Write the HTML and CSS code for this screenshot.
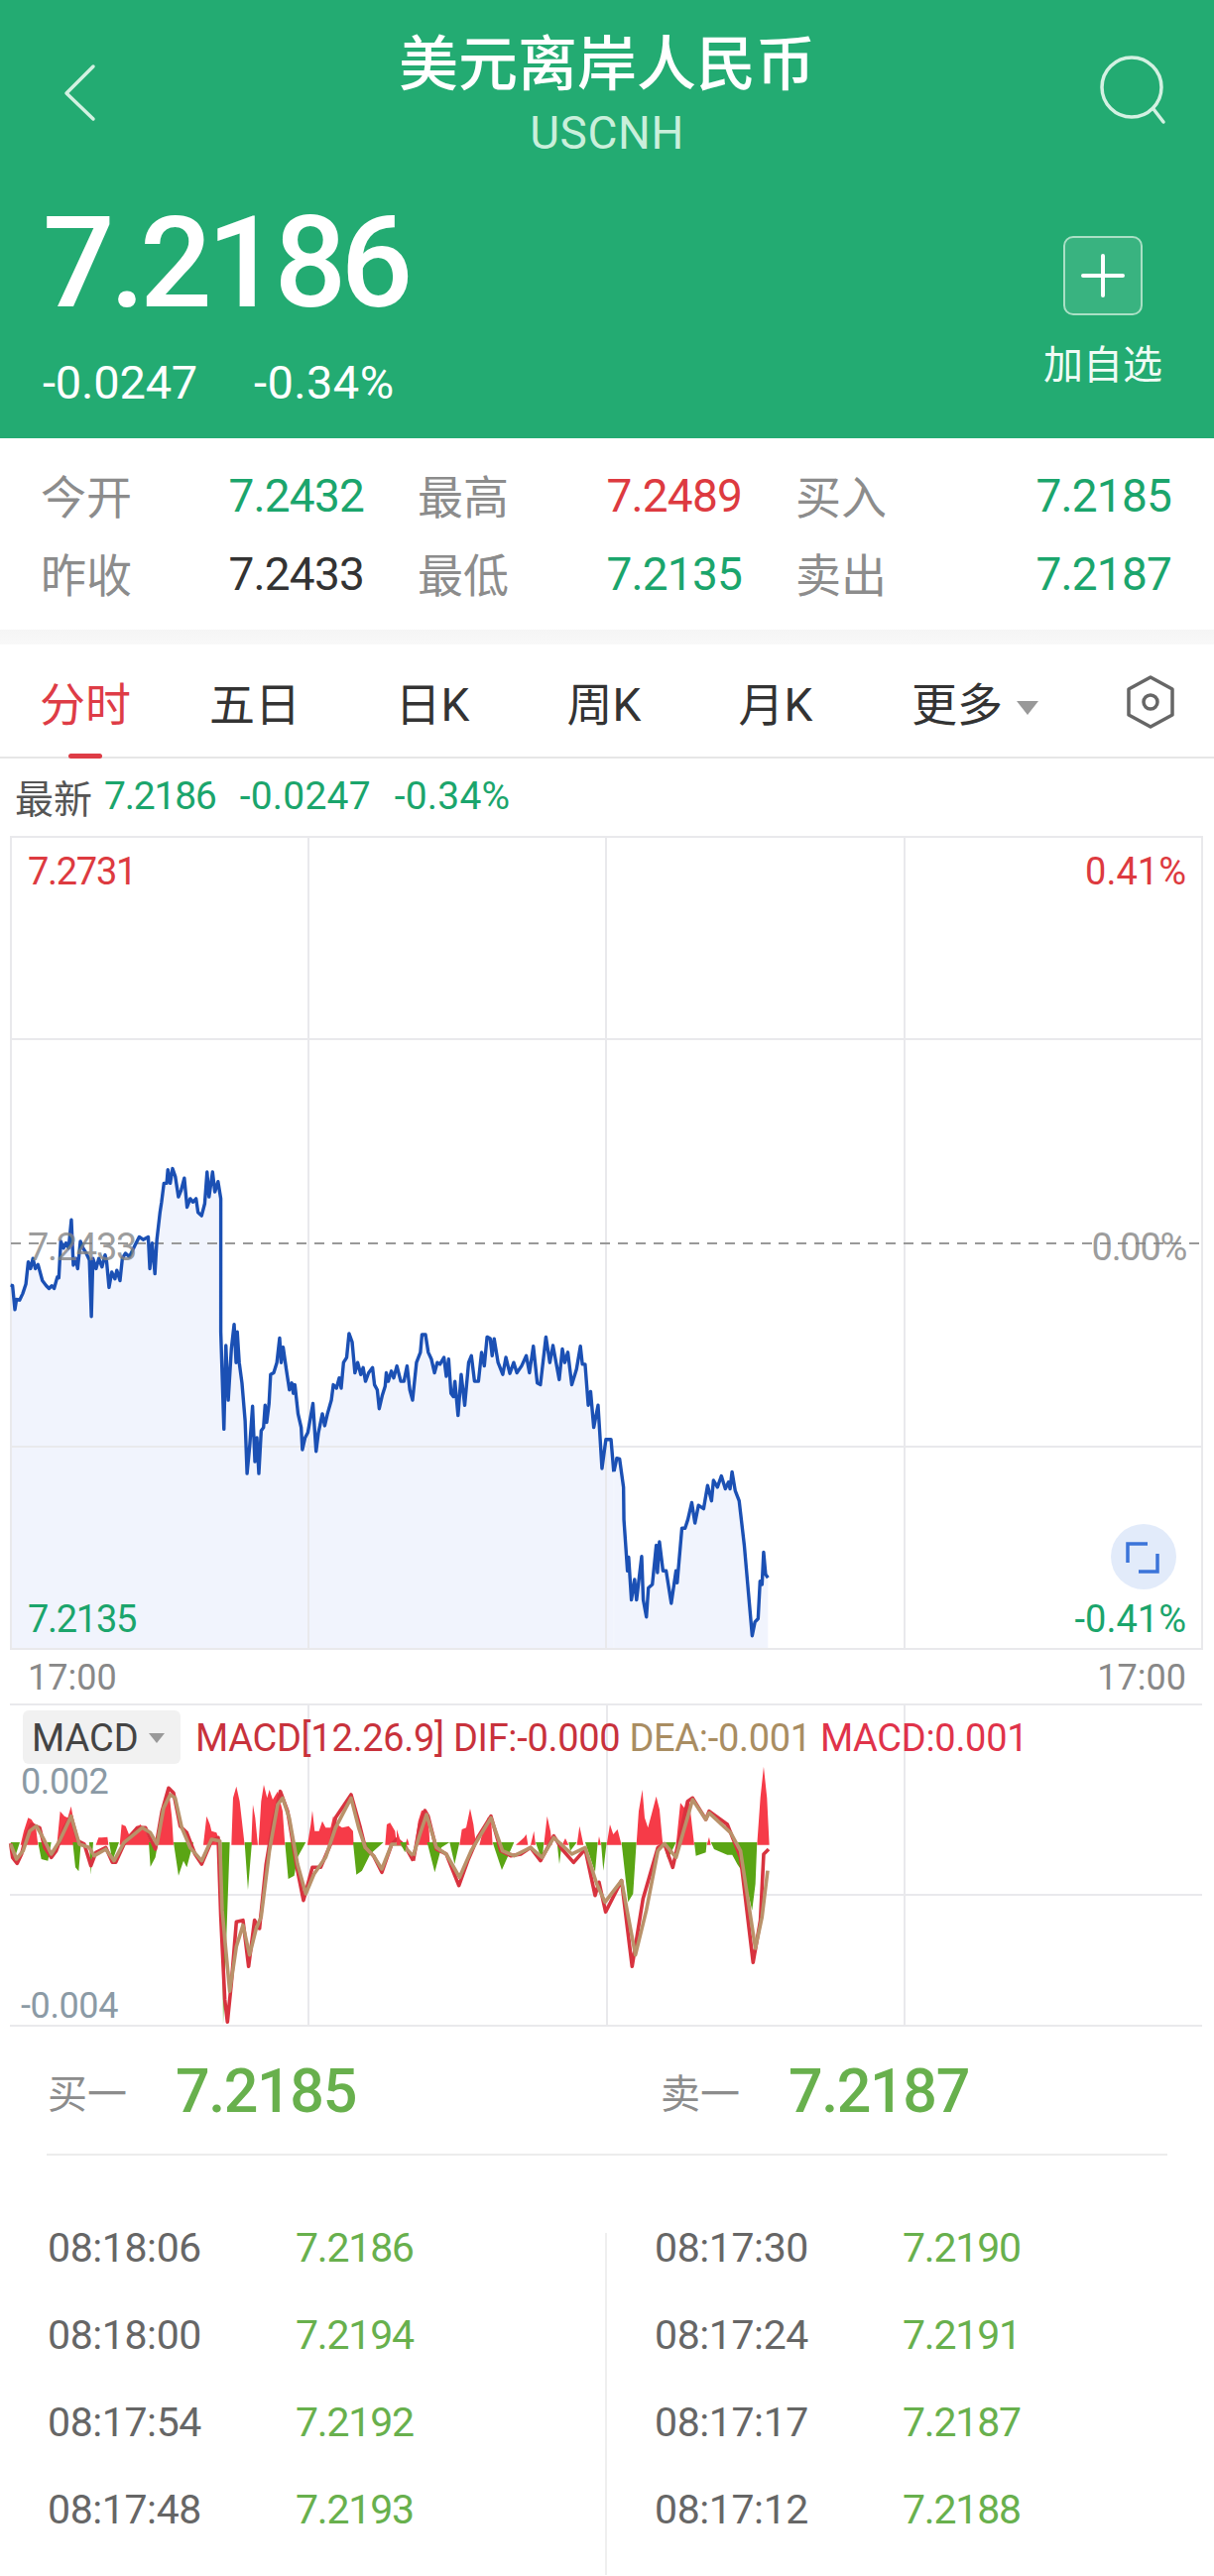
FILE: index.html
```html
<!DOCTYPE html>
<html lang="zh">
<head>
<meta charset="utf-8">
<title>美元离岸人民币</title>
<link rel="stylesheet" href="styles.css">
</head>
<body>
<div class="page">
  <header class="hero">
    <div class="nav">
      <svg class="nav-icon" width="60" height="80" viewBox="50 50 60 80"><polyline points="94,67 67,94 94,120" class="chev"/></svg>
      <div class="title-block">
        <div class="title">美元离岸人民币</div>
        <div class="code">USCNH</div>
      </div>
      <svg class="nav-icon" width="80" height="80" viewBox="1100 50 80 80"><circle cx="1141" cy="88" r="30" class="search"/><line x1="1163" y1="110" x2="1173" y2="123" class="search"/></svg>
    </div>
    <div class="price-row">
      <div>
        <div class="price">7.2186</div>
        <div class="change"><span>-0.0247</span><span>-0.34%</span></div>
      </div>
      <div class="watch">
        <div class="plus-box"><svg width="44" height="44" viewBox="0 0 44 44"><path d="M22 2V42M2 22H42" class="plus"/></svg></div>
        <div class="watch-label">加自选</div>
      </div>
    </div>
  </header>

  <section class="stats">
    <div class="stat"><span class="lbl">今开</span><span class="val green">7.2432</span></div>
    <div class="stat"><span class="lbl">最高</span><span class="val red">7.2489</span></div>
    <div class="stat"><span class="lbl">买入</span><span class="val green">7.2185</span></div>
    <div class="stat"><span class="lbl">昨收</span><span class="val dark">7.2433</span></div>
    <div class="stat"><span class="lbl">最低</span><span class="val green">7.2135</span></div>
    <div class="stat"><span class="lbl">卖出</span><span class="val green">7.2187</span></div>
  </section>
  <div class="band"></div>

  <nav class="tabs">
    <div class="tab active">分时<i class="tab-bar"></i></div>
    <div class="tab">五日</div>
    <div class="tab">日K</div>
    <div class="tab">周K</div>
    <div class="tab">月K</div>
    <div class="tab">更多<i class="caret"></i></div>
    <svg class="hex" width="52" height="56" viewBox="0 0 52 56"><path d="M26 3 L48 15 V41 L26 53 L4 41 V15 Z" class="hex-line"/><circle cx="26" cy="28" r="7" class="hex-line"/></svg>
  </nav>

  <div class="latest">
    <span class="latest-lbl">最新</span><span class="green">7.2186</span><span class="green wide">-0.0247</span><span class="green wide">-0.34%</span>
  </div>

  <section class="chart">
    <svg class="chart-svg" width="1224" height="822" viewBox="0 843 1224 822">
      <g transform="translate(0,1140) scale(.3954,.3444)">
        <polygon class="area" points="27,1518 27,453 32,455 38,525 42,495 50,497 58,478 66,450 72,385 78,405 84,375 90,405 97,393 108,440 118,455 125,463 132,455 138,463 146,430 150,432 155,325 162,345 168,330 175,345 182,262 187,395 193,375 198,405 205,325 212,345 220,360 228,380 233,545 237,375 245,405 252,375 260,400 268,365 272,385 278,460 285,415 293,435 298,410 306,440 312,375 320,360 330,370 345,335 355,312 365,320 378,312 382,405 388,330 395,420 400,320 408,240 412,210 418,155 425,155 428,115 434,155 440,112 447,135 455,195 462,175 470,140 477,225 485,200 492,210 500,200 505,240 514,250 522,215 528,122 533,195 542,122 548,180 556,150 563,200 563,590 571,875 576,630 582,790 590,640 597,568 602,680 605,590 610,680 617,740 625,850 630,1005 637,920 644,808 650,970 655,900 660,1005 666,880 672,870 676,805 680,855 686,800 690,715 698,710 706,680 713,608 717,680 722,635 730,700 738,760 744,740 748,770 752,745 760,830 768,870 771,935 778,900 785,885 798,800 806,940 812,885 822,830 828,865 835,830 845,790 850,745 858,755 865,725 870,755 876,680 884,665 890,595 898,620 905,710 912,680 920,715 926,695 932,735 940,710 950,695 955,745 962,760 967,815 975,775 982,750 985,710 990,735 998,705 1004,725 1012,690 1022,735 1030,735 1038,690 1045,760 1052,790 1062,680 1072,650 1076,598 1085,598 1092,650 1100,670 1108,710 1115,680 1122,685 1132,665 1138,720 1144,670 1150,770 1156,780 1160,735 1168,835 1176,715 1185,805 1195,680 1202,660 1210,735 1220,735 1228,650 1235,690 1242,605 1250,610 1255,660 1260,610 1270,680 1282,715 1290,665 1300,712 1310,680 1318,710 1330,690 1342,660 1350,710 1360,632 1370,740 1378,745 1392,605 1402,680 1410,630 1418,680 1426,730 1434,640 1440,680 1448,650 1458,745 1470,700 1480,632 1485,685 1492,685 1500,805 1506,765 1514,870 1525,805 1535,990 1545,905 1558,905 1565,1000 1565,1518"/>
      </g>
      <g transform="translate(600,1140) scale(.3979,.3444)">
        <polygon class="area" points="48,1518 48,998 55,960 62,962 72,1045 73,1140 82,1290 85,1250 92,1375 100,1315 105,1375 118,1248 122,1375 130,1425 135,1340 145,1330 155,1215 158,1295 163,1205 172,1290 180,1290 193,1385 205,1290 208,1325 220,1165 228,1165 235,1140 245,1090 253,1150 262,1098 275,1108 285,1040 295,1085 300,1025 310,1045 320,1012 330,1050 338,1030 342,1050 347,1000 355,1055 365,1085 378,1215 398,1480 405,1440 413,1430 418,1320 423,1330 427,1235 432,1300 438,1310 438,1518"/>
      </g>
      <rect x="11" y="844" width="1201" height="819" class="grid"/>
      <path d="M311 844V1663M611 844V1663M912 844V1663M11 1048H1212M11 1459H1212" class="grid"/>
      <line x1="11" y1="1254" x2="1212" y2="1254" class="dash"/>
      <g transform="translate(0,1140) scale(.3954,.3444)">
        <polyline class="price-line" points="27,453 32,455 38,525 42,495 50,497 58,478 66,450 72,385 78,405 84,375 90,405 97,393 108,440 118,455 125,463 132,455 138,463 146,430 150,432 155,325 162,345 168,330 175,345 182,262 187,395 193,375 198,405 205,325 212,345 220,360 228,380 233,545 237,375 245,405 252,375 260,400 268,365 272,385 278,460 285,415 293,435 298,410 306,440 312,375 320,360 330,370 345,335 355,312 365,320 378,312 382,405 388,330 395,420 400,320 408,240 412,210 418,155 425,155 428,115 434,155 440,112 447,135 455,195 462,175 470,140 477,225 485,200 492,210 500,200 505,240 514,250 522,215 528,122 533,195 542,122 548,180 556,150 563,200 563,590 571,875 576,630 582,790 590,640 597,568 602,680 605,590 610,680 617,740 625,850 630,1005 637,920 644,808 650,970 655,900 660,1005 666,880 672,870 676,805 680,855 686,800 690,715 698,710 706,680 713,608 717,680 722,635 730,700 738,760 744,740 748,770 752,745 760,830 768,870 771,935 778,900 785,885 798,800 806,940 812,885 822,830 828,865 835,830 845,790 850,745 858,755 865,725 870,755 876,680 884,665 890,595 898,620 905,710 912,680 920,715 926,695 932,735 940,710 950,695 955,745 962,760 967,815 975,775 982,750 985,710 990,735 998,705 1004,725 1012,690 1022,735 1030,735 1038,690 1045,760 1052,790 1062,680 1072,650 1076,598 1085,598 1092,650 1100,670 1108,710 1115,680 1122,685 1132,665 1138,720 1144,670 1150,770 1156,780 1160,735 1168,835 1176,715 1185,805 1195,680 1202,660 1210,735 1220,735 1228,650 1235,690 1242,605 1250,610 1255,660 1260,610 1270,680 1282,715 1290,665 1300,712 1310,680 1318,710 1330,690 1342,660 1350,710 1360,632 1370,740 1378,745 1392,605 1402,680 1410,630 1418,680 1426,730 1434,640 1440,680 1448,650 1458,745 1470,700 1480,632 1485,685 1492,685 1500,805 1506,765 1514,870 1525,805 1535,990 1545,905 1558,905 1565,1000"/>
      </g>
      <g transform="translate(600,1140) scale(.3979,.3444)">
        <polyline class="price-line" points="48,998 55,960 62,962 72,1045 73,1140 82,1290 85,1250 92,1375 100,1315 105,1375 118,1248 122,1375 130,1425 135,1340 145,1330 155,1215 158,1295 163,1205 172,1290 180,1290 193,1385 205,1290 208,1325 220,1165 228,1165 235,1140 245,1090 253,1150 262,1098 275,1108 285,1040 295,1085 300,1025 310,1045 320,1012 330,1050 338,1030 342,1050 347,1000 355,1055 365,1085 378,1215 398,1480 405,1440 413,1430 418,1320 423,1330 427,1235 432,1300 438,1310"/>
      </g>
      <circle cx="1153" cy="1570" r="33" class="expand-bg"/>
      <path d="M1137 1576V1557H1157M1167 1567V1585H1148" class="expand"/>
    </svg>
    <span class="ax ax-l ax-top red">7.2731</span>
    <span class="ax ax-r ax-top red pct">0.41%</span>
    <span class="ax ax-l ax-mid muted">7.2433</span>
    <span class="ax ax-r ax-mid muted">0.00%</span>
    <span class="ax ax-l ax-bot green">7.2135</span>
    <span class="ax ax-r ax-bot green pct">-0.41%</span>
  </section>

  <div class="times"><span>17:00</span><span>17:00</span></div>

  <section class="macd">
    <svg class="macd-svg" width="1224" height="326" viewBox="0 1718 1224 326">
      <path d="M311 1719V2043M612 1719V2043M912 1719V2043M10 1719H1212M10 1911H1212M10 2043H1212" class="grid"/>
      <g transform="translate(0,1700) scale(.3333)">
        <path class="bar-r" d="M62 482L72 440 85 400 95 405 108 425 115 482ZM172 482L182 380 195 395 205 400 215 365 225 420 232 482ZM290 482L298 460 308 460 325 458 328 482ZM362 482L368 420 380 425 390 450 410 430 425 420 440 440 460 482ZM478 482L490 400 498 340 510 310 520 400 525 482ZM615 482L625 395 635 420 640 440 655 445 668 482ZM700 482L705 340 715 305 725 350 740 482ZM760 482L765 360 772 400 780 482ZM782 482L790 350 798 300 808 340 815 315 825 345 840 320 855 380 862 482ZM930 482L940 420 945 378 952 440 965 440 975 410 985 430 1000 430 1008 395 1020 420 1035 430 1055 425 1068 440 1070 482ZM1165 482L1170 420 1180 415 1195 440 1200 482Z"/>
        <path class="bar-g" d="M32 474L45 520 60 474ZM115 474L125 525 145 530 155 474ZM220 474L228 550 238 562 245 474ZM270 474L275 572 282 474ZM330 474L340 530 360 474ZM450 474L455 548 470 520 478 474ZM525 474L540 575 555 530 565 550 585 474ZM670 474L675 1025 685 760 695 474ZM740 474L750 618 762 474ZM862 474L872 585 890 575 900 520 925 474ZM1068 474L1078 572 1095 560 1120 510 1160 474Z"/>
        <polyline class="dif" points="32,478 38,520 52,538 65,510 80,450 95,420 120,430 135,490 155,520 170,500 195,430 215,395 235,470 255,480 275,545 290,505 320,490 340,535 350,535 375,480 415,430 440,430 470,495 490,380 510,310 525,325 545,425 565,445 590,510 610,540 640,470 660,460 668,700 680,950 688,1018 700,900 715,715 735,710 752,850 770,710 785,735 805,540 825,420 848,320 870,380 900,560 918,650 945,550 970,550 1000,480 1015,400 1062,330 1090,430 1105,490 1130,515 1155,565 1185,480 1200,465 1225,485 1250,530"/>
        <polyline class="dea" points="32,480 50,525 70,500 90,440 110,425 130,460 155,510 180,470 215,395 240,480 270,490 285,515 320,495 345,530 375,475 430,430 455,445 475,480 495,370 515,330 530,340 550,430 575,490 610,530 640,465 665,470 672,680 695,925 715,790 735,725 755,815 775,735 790,700 815,500 840,360 855,340 875,400 900,540 925,630 950,570 985,520 1015,430 1062,340 1085,430 1105,490 1130,515 1155,555 1185,480 1215,480 1250,515"/>
      </g>
      <g transform="translate(400,1700) scale(.3333)">
        <path class="bar-r" d="M0 482L0 435 5 450 15 482ZM25 482L32 462 38 482ZM55 482L65 410 75 378 90 380 98 440 100 482ZM190 482L197 435 210 430 222 372 232 420 240 482ZM250 482L262 435 275 400 285 395 290 482ZM360 482L385 460 392 450 397 482ZM405 482L415 440 420 482ZM445 482L455 395 465 440 470 482ZM500 482L510 462 520 482ZM545 482L553 425 565 482ZM608 482L612 456 618 482ZM635 482L645 420 655 450 668 435 680 482ZM725 482L732 380 743 315 750 400 760 430 772 385 785 335 795 375 805 482ZM845 482L858 355 870 370 885 350 900 482ZM938 482L945 458 950 482ZM1090 482L1100 340 1110 245 1120 340 1127 482Z"/>
        <path class="bar-g" d="M10 474L25 505 30 474ZM92 474L115 565 135 490 160 474ZM160 474L175 540 190 474ZM290 474L318 558 355 474ZM420 474L440 530 445 474ZM485 474L492 540 500 474ZM520 474L525 500 545 474ZM570 474L600 565 608 474ZM618 474L625 560 635 474ZM680 474L700 655 715 630 725 474ZM805 474L820 525 845 474ZM900 474L905 515 935 505 938 474ZM950 474L960 495 1000 512 1015 512 1030 540 1050 570 1075 680 1085 600 1090 474Z"/>
        <polyline class="dif" points="50,530 70,420 85,378 95,395 120,495 150,510 188,605 215,530 245,460 285,395 315,500 345,515 375,510 405,490 435,530 475,455 500,495 535,535 570,495 600,635 612,595 632,685 680,590 712,850 745,645 790,490 810,480 835,550 880,350 895,340 935,405 945,380 1000,420 1040,520 1078,838 1100,710 1110,510 1125,495"/>
        <polyline class="dea" points="50,515 70,450 90,390 120,490 150,510 190,580 225,500 285,400 320,500 355,515 405,490 440,520 475,460 530,510 570,490 605,600 630,655 680,590 722,815 755,680 790,500 810,478 845,520 895,345 935,405 945,385 1010,445 1040,500 1085,795 1105,700 1122,560"/>
      </g>
    </svg>
    <div class="macd-head">
      <div class="chip">MACD<i class="caret caret-sm"></i></div>
      <div class="legend"><span class="c-dif">MACD[12.26.9] DIF:-0.000</span><span class="c-dea">DEA:-0.001</span><span class="c-macd">MACD:0.001</span></div>
    </div>
    <span class="macd-y macd-y-top">0.002</span>
    <span class="macd-y macd-y-bot">-0.004</span>
  </section>

  <section class="bidask">
    <div class="ba"><span class="ba-lbl">买一</span><span class="ba-val">7.2185</span></div>
    <div class="ba"><span class="ba-lbl">卖一</span><span class="ba-val">7.2187</span></div>
  </section>
  <div class="rule"></div>

  <section class="ticks">
    <div class="col">
      <div class="tick"><span>08:18:06</span><span class="tp">7.2186</span></div>
      <div class="tick"><span>08:18:00</span><span class="tp">7.2194</span></div>
      <div class="tick"><span>08:17:54</span><span class="tp">7.2192</span></div>
      <div class="tick"><span>08:17:48</span><span class="tp">7.2193</span></div>
    </div>
    <div class="col col-r">
      <div class="tick"><span>08:17:30</span><span class="tp">7.2190</span></div>
      <div class="tick"><span>08:17:24</span><span class="tp">7.2191</span></div>
      <div class="tick"><span>08:17:17</span><span class="tp">7.2187</span></div>
      <div class="tick"><span>08:17:12</span><span class="tp">7.2188</span></div>
    </div>
  </section>
</div>
</body>
</html>
```
FILE: styles.css
```css
* { box-sizing: border-box; }
html, body { margin: 0; padding: 0; background: #fff; }
body { font-family: Roboto, "Noto Sans CJK SC", sans-serif; font-variant-numeric: tabular-nums; }
.page { width: 1224px; height: 2598px; overflow: hidden; background: #fff; }

.green { color: #1ba56c; }
.red { color: #dd3a40; }
.dark { color: #333; }
.muted { color: rgba(130,130,130,.8); }

/* header */
.hero { height: 442px; background: #23ab72; color: #fff; padding-top: 28px; }
.nav { display: flex; justify-content: space-between; align-items: flex-start; height: 130px; padding: 22px 44px 0 50px; position: relative; }
.nav-icon { flex: none; }
.chev, .search, .plus { fill: none; stroke: #d3f1e2; stroke-width: 3.5; stroke-linecap: round; stroke-linejoin: round; }
.plus { stroke: #fff; stroke-width: 4; }
.title-block { position: absolute; left: 0; right: 0; top: 0; text-align: center; }
.title { font-size: 60px; line-height: 76px; font-weight: 500; }
.code { font-size: 46px; line-height: 56px; margin-top: 2px; color: #c9efdb; letter-spacing: .6px; }
.price-row { display: flex; justify-content: space-between; padding: 32px 52px 0 43px; }
.price { font-size: 128px; line-height: 150px; font-weight: 500; letter-spacing: -5.1px; }
.change { display: flex; gap: 57px; font-size: 47px; line-height: 56px; letter-spacing: -.2px; margin-top: 18px; }
.change span + span { letter-spacing: .4px; }
.watch { display: flex; flex-direction: column; align-items: center; padding-top: 48px; }
.plus-box { width: 80px; height: 80px; border-radius: 10px; border: 2px solid #a9e0c5; background: rgba(255,255,255,.1); display: flex; align-items: center; justify-content: center; }
.watch-label { font-size: 40px; line-height: 54px; margin-top: 24px; color: #f0fbf5; }

/* stats */
.stats { height: 193px; display: grid; grid-template-columns: 324px 325px 377px; column-gap: 56px; grid-auto-rows: 79px; padding: 18px 43px 0; }
.stat { display: flex; justify-content: space-between; align-items: center; }
.lbl { font-size: 46px; color: #8c8c8c; margin: -3px 0 0 -2px; }
.val { font-size: 46px; letter-spacing: -.8px; }
.band { height: 15px; background: linear-gradient(#f5f5f5, #f8f8f8); }

/* tabs */
.tabs { height: 115px; display: grid; grid-template-columns: 172px 170px 188px 158px 188px 214px 134px; align-items: center; border-bottom: 2px solid #e6e6e6; padding-bottom: 2px; position: relative; }
.tab { font-size: 46px; color: #333; text-align: center; line-height: 60px; position: relative; margin-top: 10px; }
.tab.active { color: #de3c46; }
.tab-bar { position: absolute; left: 69px; top: 60px; width: 34px; height: 5px; border-radius: 3px; background: #de3c46; margin-top: 19px; }
.caret { display: inline-block; width: 0; height: 0; margin-left: 14px; border-left: 11px solid transparent; border-right: 11px solid transparent; border-top: 14px solid #999; vertical-align: 6px; }
.hex { margin-left: 44px; margin-top: 4px; }
.hex-line { fill: none; stroke: #666; stroke-width: 3.5; stroke-linejoin: round; }

/* latest */
.latest { height: 78px; display: flex; align-items: center; padding-left: 15px; font-size: 39px; letter-spacing: -1.2px; padding-bottom: 2px; }
.latest-lbl { color: #555; margin-right: 12px; letter-spacing: 0; }
.latest .wide { margin-left: 24px; letter-spacing: .2px; }

/* chart */
.chart { height: 821px; position: relative; }
.chart-svg { display: block; }
.area { fill: #f1f4fd; }
.grid { fill: none; stroke: #e9e9ec; stroke-width: 2; }
.dash { stroke: #999; stroke-width: 2; stroke-dasharray: 10 8; }
.price-line { fill: none; stroke: #1b50b4; stroke-width: 3.4; stroke-linejoin: round; vector-effect: non-scaling-stroke; }
.expand-bg { fill: #e2ebfa; }
.expand { fill: none; stroke: #3b74d9; stroke-width: 3.5; }
.ax { position: absolute; font-size: 38px; line-height: 40px; letter-spacing: -1.3px; margin-top: 1px; }
.ax-l { left: 28px; }
.ax-r { right: 28px; }
.ax-top { top: 15px; }
.ax-mid { top: 394px; }
.ax-bot { top: 769px; }
.pct { letter-spacing: 0; }

.times { height: 54px; display: flex; justify-content: space-between; align-items: center; padding: 2px 28px 0; font-size: 36px; color: #888; }

/* macd */
.macd { height: 326px; position: relative; }
.macd-svg { position: absolute; left: 0; top: 0; display: block; }
.bar-r { fill: #f63b48; }
.bar-g { fill: #5aa514; }
.dif { fill: none; stroke: #d8333f; stroke-width: 3.6; stroke-linejoin: round; vector-effect: non-scaling-stroke; }
.dea { fill: none; stroke: #b9926a; stroke-width: 3.6; stroke-linejoin: round; vector-effect: non-scaling-stroke; }
.macd-head { position: relative; display: flex; align-items: center; padding: 7px 0 0 23px; }
.chip { width: 159px; height: 54px; background: #f1f1f1; border-radius: 6px; font-size: 38px; line-height: 56px; color: #444; padding-left: 9px; white-space: nowrap; }
.caret-sm { margin-left: 10px; border-left-width: 8px; border-right-width: 8px; border-top-width: 10px; vertical-align: 8px; }
.legend { display: flex; gap: 9px; margin-left: 15px; padding-top: 2px; font-size: 38px; letter-spacing: -.3px; white-space: nowrap; }
.c-dif { color: #c8323c; }
.c-dea { color: #a98d62; }
.c-macd { color: #e0334a; }
.macd-y { position: absolute; left: 21px; font-size: 36px; line-height: 40px; color: #8b9aa5; letter-spacing: -.4px; }
.macd-y-top { top: 59px; }
.macd-y-bot { top: 285px; }

/* bid ask */
.bidask { height: 128px; display: grid; grid-template-columns: 618px 1fr; padding: 2px 0 0 48px; }
.ba { display: flex; align-items: center; gap: 49px; }
.ba-lbl { font-size: 40px; color: #8c8c8c; }
.ba-val { font-size: 61px; color: #68b04d; letter-spacing: -1.4px; font-weight: 500; }
.rule { height: 2px; margin: 0 47px; background: #ececec; }

/* ticks */
.ticks { display: grid; grid-template-columns: 612px 1fr; padding-top: 49px; height: 423px; position: relative; }
.col { padding-left: 48px; }
.col-r { padding-left: 48px; }
.col-r::before { content: ""; position: absolute; left: 610px; top: 78px; bottom: 0; width: 2px; background: #efefef; }
.tick { display: grid; grid-template-columns: 250px auto; height: 88px; align-items: center; font-size: 41px; color: #666; letter-spacing: -.4px; }
.tp { color: #68b04d; letter-spacing: -1.2px; }
```
